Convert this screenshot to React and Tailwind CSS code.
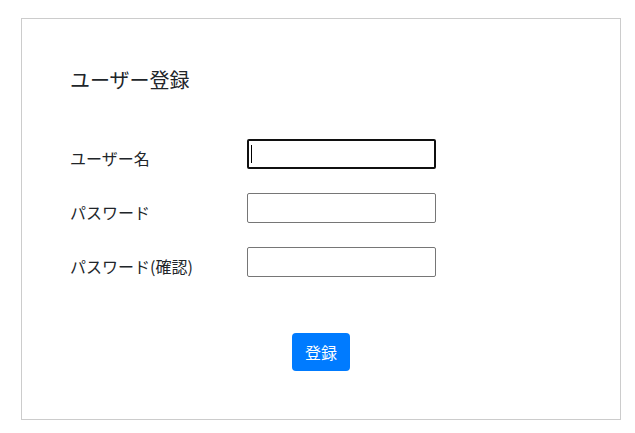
import React from "react";

const fields = [
  { label: "ユーザー名", type: "text", focus: true },
  { label: "パスワード", type: "password" },
  { label: "パスワード(確認)", type: "password" },
];

const App = () => {
  return (
    <div
      className="min-h-[433px] bg-white pt-[18px] pl-[21px] text-[#212529]"
      style={{ fontFamily: '"Noto Sans CJK JP", "Noto Sans", sans-serif' }}
    >
      <div className="w-[600px] border border-[#cccccc] pl-[48px] pr-[48px] pt-[46px] pb-[48px]">
        <h3 className="text-[20px] leading-[30px] font-normal">ユーザー登録</h3>

        <div className="mt-[44px] flex flex-col gap-[24px]">
          {fields.map((f, index) => (
            <div key={index} className="flex items-start">
              <label className="mt-[8px] w-[177px] text-[16px] leading-[22px]">
                {f.label}
              </label>
              <div className="relative">
                <input
                  type={f.type}
                  autoFocus={f.focus}
                  className={`block h-[30px] w-[189px] rounded-[2px] px-[2px] outline-none ${
                    f.focus
                      ? "border-2 border-[#101010]"
                      : "border border-[#767676]"
                  }`}
                />
                {/* caret of the focused field */}
                {f.focus && (
                  <span className="pointer-events-none absolute left-[4px] top-[6px] h-[18px] w-px bg-black" />
                )}
              </div>
            </div>
          ))}
        </div>

        <div className="mt-[56px] flex justify-center">
          <button className="h-[38px] w-[58px] rounded-[4px] bg-[#007bff] text-[16px] text-white">
            登録
          </button>
        </div>
      </div>
    </div>
  );
};

export default App;
